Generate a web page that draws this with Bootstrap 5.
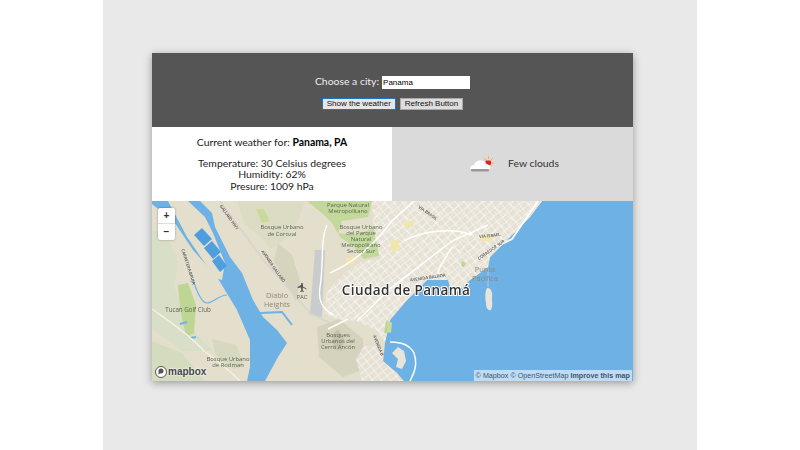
<!DOCTYPE html>
<html lang="en">
<head>
<meta charset="utf-8">
<title>Weather</title>
<link href="https://cdn.jsdelivr.net/npm/bootstrap@5.3.3/dist/css/bootstrap.min.css" rel="stylesheet">
<style>
html, body { height: 450px; overflow: hidden; }
body { background: #fff; font-family: Lato, "Open Sans", sans-serif; font-size: 10.4px; }
.page-band { width: 594px; height: 450px; margin-left: 103px; background: #e9e9e9; padding: 53px 0 0 49px; }
.app-box { width: 481px; box-shadow: 0 2px 8px rgba(0,0,0,.35); }
.top-bar { background: #555; height: 74px; color: #eee; font-size: 10.4px; padding-top: 21px; line-height: 15px; }
.city-label { margin-right: 3px; }
.city-input { width: 88px; height: 13px; border: 0; padding: 0 1px; font: 8px "Liberation Sans", sans-serif; color: #000; }
.btn-row { margin-top: 9px; gap: 4px; }
.old-btn { padding: 0 4px; font: 8px/10px "Liberation Sans", sans-serif; background: #ddd; color: #111; border: 1px solid #aaa; box-sizing: content-box; height: 10px; }
.old-btn.is-focus { border-color: #1a73c4; background: #e6e6e6; }
.info-row { height: 74px; }
.info-left { width: 240px; background: #fff; color: #222; line-height: 11.5px; padding-top: 10px; font-size: 10.4px; }
.info-left p { margin: 0 0 9px; }
.info-left b { color: #000; font-weight: 700; }
.info-right { width: 241px; background: #dadada; color: #333; gap: 14px; font-size: 10.4px; padding-left: 4px; }
.map-area { height: 180px; position: relative; overflow: hidden; background: #6eb1e4; }
.map-art { display: block; filter: blur(.3px); }
.zoom-ctl { position: absolute; left: 6px; top: 7px; width: 17px; height: 32px; background: #fff; border-radius: 2px; box-shadow: 0 0 2px rgba(0,0,0,.4); font: 700 10px/15px "Liberation Sans", sans-serif; color: #333; text-align: center; }
.zoom-ctl div + div { border-top: 1px solid #ddd; }
.map-credit { position: absolute; right: 1px; bottom: 0; height: 11px; padding: 0 2px; background: rgba(205,228,248,.85); font: 7.2px/11px "Liberation Sans", sans-serif; color: #456; }
.map-logo { position: absolute; left: 3px; bottom: 3px; display: flex; align-items: center; gap: 1px; font: 700 10px/12px "Liberation Sans", sans-serif; color: #444; text-shadow: 0 0 2px #fff, 0 0 2px #fff; }
</style>
</head>
<body>
<div class="page-band">
  <div class="app-box">
    <div class="top-bar text-center">
      <div><span class="city-label">Choose a city:</span><input class="city-input" type="text" value="Panama"></div>
      <div class="btn-row d-flex justify-content-center">
        <button class="old-btn is-focus">Show the weather</button>
        <button class="old-btn">Refresh Button</button>
      </div>
    </div>
    <div class="info-row d-flex">
      <div class="info-left text-center">
        <p>Current weather for: <b>Panama, PA</b></p>
        <div>Temperature: 30 Celsius degrees</div>
        <div>Humidity: 62%</div>
        <div>Presure: 1009 hPa</div>
      </div>
      <div class="info-right d-flex align-items-center justify-content-center">
        <svg width="24" height="17" viewBox="0 0 24 17">
          <g stroke="#f2b24a" stroke-width="1"><path d="M18.500 0v3M14 2l2 2M23 2l-2 2M24 7h-3M21.500 10l-1-1"/></g>
          <rect x="15.500" y="4.500" width="5.500" height="4.500" rx="1" fill="#e8201a"/>
          <path d="M0 13c0-2.500 1.500-4 4-4 1-3.500 4-5 7-4.500 2.500 0 4.500 1.500 5.500 3.500 2 0 4 2 4 5z" fill="#fff"/>
          <rect x="1" y="13" width="18" height="2.500" rx="1" fill="#999"/>
        </svg>
        <span>Few clouds</span>
      </div>
    </div>
    <div class="map-area">
      <svg class="map-art" width="481" height="180" viewBox="0 0 481 180">
        <defs>
          <pattern id="gridA" width="7" height="6" patternUnits="userSpaceOnUse" patternTransform="rotate(-38)">
            <rect width="7" height="6" fill="#e6e1d4"/>
            <path d="M0 0H7M0 0V6" stroke="#fff" stroke-width=".9"/>
          </pattern>
          <pattern id="gridB" width="9" height="11" patternUnits="userSpaceOnUse" patternTransform="rotate(32)">
            <path d="M0 0H9M0 0V11" stroke="#fff" stroke-width=".6"/>
          </pattern>
        </defs>
        <rect width="481" height="180" fill="#6eb1e4"/>
        <!-- land west of the canal -->
        <path d="M0 3L23 22 41 49 65 76 85 109 98 139 98 166 95 180H0z" fill="#e4decd"/>
        <path d="M0 30L14 30 26 62 22 86 42 130 60 150 30 150 0 128z" fill="#d9dec6"/>
        <path d="M26 84l10-2 8 22-2 28-8 4-6-30z" fill="#bdd693"/>
        <path d="M0 140l30 12 22 28H0z" fill="#d5dbbd"/>
        <path d="M60 138l24 6 8 20-10 4-18-14z" fill="#d6d8bf"/>
        <!-- island with the port basins -->
        <path d="M16 0H36L53 16 61 32 73 62 70 79 63 77 35 36z" fill="#e4decd"/>
        <path d="M42 34l8-7 10 11-8 7zM52 47l8-7 9 11-8 7zM60 60l7-6 8 11-7 6z" fill="#4f9fe0"/>
        <path d="M41 79c4 12 9 23 14 23 6 0 12-8 20-8" stroke="#6eb1e4" stroke-width="1.200" fill="none"/>
        <path d="M28 123l7-2M38 137l6-1" stroke="#6eb1e4" stroke-width="2"/>
        <!-- main land, east side -->
        <path d="M48 0H390L378 16 358 36 338 56 336 66 318 79 301 94 296 79 275 79 255 99 238 119 232 136 233 142 231 162 245 172 252 180H113L126 156 135 142 125 129 111 116 101 99 90 72 78 56 63 26 60 12z" fill="#e4decd"/>
        <path d="M85 0h68l-6 18-14 20-14 10-12-14-14-10z" fill="#dcdcc4"/>
        <path d="M104 8l8 0 6 12-8 2z" fill="#c7da9c"/>
        <path d="M155 0h65l-4 16-26 4-4 12 14 2 28-8 4 28-20 4-10-12-14-10-8-14-8-8z" fill="#c3d99b"/>
        <path d="M126 42l14 12 8 26-4 20-12-20-10-20z" fill="#d6d3be"/>
        <path d="M165 126l22-8 24 20 2 30-22 8-24-20z" fill="#d5d2bd"/>
        <path d="M180 134l6-6 6 10-2 12-8-2z" fill="#c4c2ad"/>
        <!-- city blocks -->
        <path d="M220 0H390L378 16 358 36 338 56 336 66 318 79 301 94 296 79 275 79 255 99 238 119 233 142 225 130 205 120 185 118 172 112 175 90 195 70 210 60 228 58 222 30z" fill="url(#gridA)"/>
        <path d="M220 0H390L378 16 358 36 338 56 336 66 318 79 301 94 296 79 275 79 255 99 238 119 233 142 225 130 205 120 185 118 172 112 175 90 195 70 210 60 228 58 222 30z" fill="url(#gridB)"/>
        <path d="M212 145l16 0 3 15 14 12 5 8h-40l-6-22z" fill="url(#gridA)"/>
        <path d="M253 20h9l-1 6h-9zM329 35h13l-2 5h-12zM194 57l10-2-2 8-8 1zM238 40l8-2 2 10-8 4z" fill="#f1e6ae"/>
        <path d="M310 60l4 2-2 4-3-1zM234 120l6 2-3 10-5 0z" fill="#bcd68f"/>
        <!-- runway -->
        <path d="M163 49h10l-3 67-12-2z" fill="#c9cbcc"/>
        <!-- main roads -->
        <g stroke="#fff" fill="none" stroke-width="1.400">
          <path d="M175 24C168 40 172 62 168 86 166 100 170 108 182 114"/>
          <path d="M178 72C205 60 225 40 240 20L262 0"/>
          <path d="M205 120L240 86 300 40 336 24M176 128L196 118"/>
          <path d="M300 46C290 62 284 70 286 78M252 40C270 30 300 26 320 34"/>
          <path d="M332 52L360 38 386 0" stroke-width="1.800"/>
          <path d="M238 141C250 141 258 144 262 152 266 164 262 172 258 180" stroke-width="1.500"/>
          <path d="M0 108C14 118 38 134 52 150 66 160 80 172 88 180" stroke="#f4f1e8"/>
        </g>
        <path d="M68 0L112 60 158 112 178 122" stroke="#d8d6cc" stroke-width="1.800" fill="none"/>
        <!-- inlets and islands -->
        <path d="M108 112L130 111 140 124" stroke="#6eb1e4" stroke-width="2" fill="none"/>
        <path d="M246 146l6 4 2 10-4 8-6-2 2-8-6-6z" fill="#e9e4d8"/>
        <path d="M335 87c4-1 6 5 5 10 0 6 1 8-1 12-3 1-5-2-5-7-1-5-1-12 1-15z" fill="#e9e5da"/>
        <path d="M336 66v20" stroke="#a8cbe8" stroke-width="1"/>
        <path d="M235 119l5 3-1 10-4-2z" fill="#c7d9a0"/>
        <!-- small labels -->
        <g font-family="'Open Sans', sans-serif" text-anchor="middle" fill="#5a6650" font-size="5.900">
          <text x="196" y="6">Parque Natural</text><text x="196" y="12">Metropolitano</text>
          <text x="209" y="28">Bosque Urbano</text><text x="209" y="34">del Parque</text><text x="209" y="40">Natural</text><text x="209" y="46">Metropolitano</text><text x="209" y="52">Sector Sur</text>
          <text x="130" y="28">Bosque Urbano</text><text x="130" y="35">de Corozal</text>
          <text x="36" y="111" font-size="6.200">Tucan Golf Club</text>
          <text x="76" y="160">Bosque Urbano</text><text x="76" y="166">de Rodman</text>
          <text x="186" y="136">Bosques</text><text x="186" y="142">Urbanos del</text><text x="186" y="148">Cerro Ancón</text>
          <text x="150" y="98">PAC</text>
        </g>
        <g font-family="'Open Sans', sans-serif" text-anchor="middle" fill="#8a8a80" font-size="7.400">
          <text x="125" y="97">Diablo</text><text x="125" y="106">Heights</text>
          <text x="333" y="71">Punta</text><text x="333" y="80">Pacífica</text>
        </g>
        <g font-family="'Open Sans', sans-serif" text-anchor="middle" fill="#555" font-size="4.200" font-weight="600">
          <text transform="translate(76 17) rotate(55)">GALLARD HWY</text>
          <text transform="translate(120 66) rotate(55)">AVENIDA GALLARD</text>
          <text transform="translate(35 66) rotate(72)">CARRETERA BRUJA</text>
          <text transform="translate(225 145) rotate(68)">AVENIDA B</text>
          <text transform="translate(275 13) rotate(35)">VIA BRASIL</text>
          <text transform="translate(338 36) rotate(-6)">VIA ISRAEL</text>
          <text transform="translate(340 50) rotate(-35)">CORREDOR SUR</text>
          <text transform="translate(276 78) rotate(-8)">AVENIDA BALBOA</text>
        </g>
        <text x="254" y="94" text-anchor="middle" font-family="'Open Sans', sans-serif" font-size="13.500" font-weight="600" letter-spacing=".4" fill="#333" stroke="#fff" stroke-width="2" paint-order="stroke">Ciudad de Panamá</text>
        <g fill="#555" transform="translate(150 87)"><path d="M-.7-5h1.400l.3 3.600 3.400 2v1L1-.6.7 2.400l1.300 1v.7L0 3.600l-2 .5v-.7l1.300-1L-1-.6l-3.400.6v-1l3.400-2z"/></g>
      </svg>
      <div class="zoom-ctl"><div>+</div><div>−</div></div>
      <div class="map-logo">
        <svg width="12" height="12" viewBox="0 0 12 12"><circle cx="6" cy="6" r="5.500" fill="#fff" stroke="#555"/><path d="M3.500 8.500V5a2.500 2.500 0 1 1 2.500 2.500H5z" fill="#555"/></svg>
        <span>mapbox</span>
      </div>
      <div class="map-credit">© Mapbox © OpenStreetMap <b>Improve this map</b></div>
    </div>
  </div>
</div>
</body>
</html>
